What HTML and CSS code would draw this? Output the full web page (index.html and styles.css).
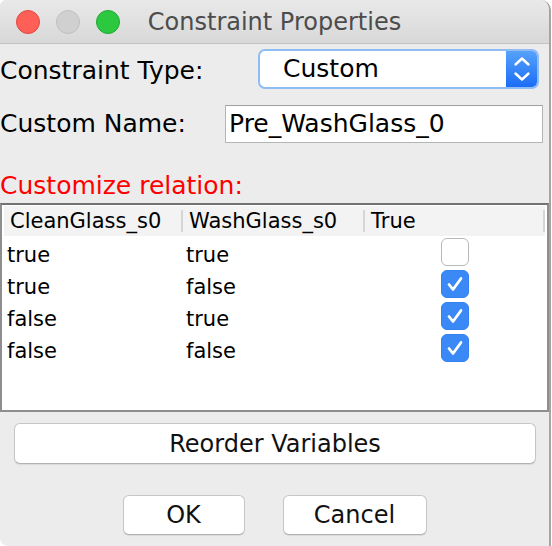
FILE: index.html
```html
<!DOCTYPE html>
<html>
<head>
<meta charset="utf-8">
<link rel="stylesheet" href="styles.css">
</head>
<body>
<div class="window">
  <div class="titlebar">
    <div class="lights">
      <span class="light red"></span>
      <span class="light gray"></span>
      <span class="light green"></span>
    </div>
    <div class="title">Constraint Properties</div>
    <div></div>
  </div>
  <div class="content">
    <div class="row row-type">
      <span class="label label-type">Constraint Type:</span>
      <div class="combo">
        <span class="combo-value">Custom</span>
        <span class="combo-arrows">
          <svg width="31" height="36" viewBox="0 0 31 36">
            <path d="M9.5 13.5 L16 7.5 L22.5 13.5" fill="none" stroke="#fff" stroke-width="2.4" stroke-linecap="round" stroke-linejoin="round"/>
            <path d="M9.5 22.5 L16 28.5 L22.5 22.5" fill="none" stroke="#fff" stroke-width="2.4" stroke-linecap="round" stroke-linejoin="round"/>
          </svg>
        </span>
      </div>
    </div>
    <div class="row row-name">
      <span class="label">Custom Name:</span>
      <div class="field">Pre_WashGlass_0</div>
    </div>
    <div class="section-title">Customize relation:</div>
    <div class="table">
      <div class="thead">
        <div class="th">CleanGlass_s0</div><div class="th-div"></div>
        <div class="th">WashGlass_s0</div><div class="th-div"></div>
        <div class="th">True</div><div class="th-div"></div>
      </div>
      <div class="tr"><div class="td">true</div><div class="td">true</div><div class="td td-check"><span class="checkbox"></span></div></div>
      <div class="tr"><div class="td">true</div><div class="td">false</div><div class="td td-check"><span class="checkbox on"><svg width="26" height="26" viewBox="0 0 26 26"><path d="M7 13.5 L11 18.5 L19 7.5" fill="none" stroke="#fff" stroke-width="2.8" stroke-linecap="round" stroke-linejoin="round"/></svg></span></div></div>
      <div class="tr"><div class="td">false</div><div class="td">true</div><div class="td td-check"><span class="checkbox on"><svg width="26" height="26" viewBox="0 0 26 26"><path d="M7 13.5 L11 18.5 L19 7.5" fill="none" stroke="#fff" stroke-width="2.8" stroke-linecap="round" stroke-linejoin="round"/></svg></span></div></div>
      <div class="tr"><div class="td">false</div><div class="td">false</div><div class="td td-check"><span class="checkbox on"><svg width="26" height="26" viewBox="0 0 26 26"><path d="M7 13.5 L11 18.5 L19 7.5" fill="none" stroke="#fff" stroke-width="2.8" stroke-linecap="round" stroke-linejoin="round"/></svg></span></div></div>
    </div>
    <button class="btn btn-wide">Reorder Variables</button>
    <div class="actions">
      <button class="btn btn-ok">OK</button>
      <button class="btn btn-cancel">Cancel</button>
    </div>
  </div>
</div>
</body>
</html>
```

FILE: styles.css
```css
html, body {
  margin: 0;
  padding: 0;
  background: #ffffff;
}

body {
  font-family: "DejaVu Sans", "Liberation Sans", sans-serif;
  color: #000;
}

.window {
  width: 549px;
  height: 546px;
  background: #ececec;
  border-right: 2px solid #a4a4a4;
  border-radius: 6px 10px 0 8px;
  overflow: hidden;
}

.titlebar {
  height: 43px;
  border-bottom: 1px solid #c4c4c4;
  background: linear-gradient(#e9e9e9, #d8d8d8);
  display: grid;
  grid-template-columns: 1fr auto 1fr;
  align-items: center;
}

.lights {
  display: flex;
  gap: 16px;
  padding-left: 16px;
}

.light {
  width: 24px;
  height: 24px;
  border-radius: 50%;
  box-sizing: border-box;
  border: 1px solid;
}

.light.red { background: #fe5f57; border-color: #e2463f; }
.light.gray { background: #d0d0d0; border-color: #bfbfbf; }
.light.green { background: #2bc840; border-color: #20a931; }

.title {
  font-size: 24px;
  color: #4c4c4c;
  line-height: 41px;
  padding-top: 2px;
  white-space: nowrap;
}

.content {
  padding-top: 5px;
}

.row {
  display: flex;
  align-items: center;
  justify-content: space-between;
}

.row-type {
  height: 40px;
  padding-right: 10px;
}

.row-name {
  height: 38px;
  margin-top: 16px;
  padding-right: 6px;
}

.label {
  font-size: 25px;
  line-height: 30px;
  white-space: nowrap;
}

.label-type {
  padding-top: 4px;
}

.combo {
  width: 281px;
  height: 40px;
  box-sizing: border-box;
  border: 2px solid #8fbcf4;
  border-radius: 7px;
  overflow: hidden;
  display: flex;
  background: #fff;
}

.combo-value {
  flex: 1;
  font-size: 25px;
  line-height: 36px;
  padding-left: 23px;
}

.combo-arrows {
  width: 31px;
  display: flex;
  background: linear-gradient(#56a2fb, #1b6df6);
}

.field {
  width: 318px;
  height: 38px;
  box-sizing: border-box;
  border: 1px solid #b4b4b4;
  border-top-color: #a0a0a0;
  background: #fff;
  font-size: 25px;
  line-height: 36px;
  padding-left: 3px;
  white-space: nowrap;
}

.section-title {
  margin-top: 28px;
  font-size: 25px;
  line-height: 30px;
  color: #fe0000;
}

.table {
  margin-top: 2px;
  height: 209px;
  box-sizing: border-box;
  border: 2px solid #8e8e8e;
  border-top-color: #727272;
  background: #fff;
  padding: 1px 2px 0 2px;
}

.thead {
  display: grid;
  grid-template-columns: 177px 2px 180px 2px 178px 2px;
  height: 30px;
  background: #f3f3f3;
  align-items: center;
}

.th {
  font-size: 21px;
  line-height: 30px;
  padding-left: 6px;
  white-space: nowrap;
  overflow: hidden;
}

.th-div {
  height: 22px;
  background: #d6d6d6;
}

.tr {
  display: grid;
  grid-template-columns: 179px 182px 180px;
  height: 32px;
}

.td {
  font-size: 21px;
  line-height: 26px;
  padding-top: 6px;
  padding-left: 3px;
}

.td-check {
  display: flex;
  align-items: center;
  justify-content: center;
  padding: 0;
}

.checkbox {
  width: 28px;
  height: 28px;
  box-sizing: border-box;
  border-radius: 6px;
  border: 1px solid #b9b9b9;
  background: #fff;
  display: flex;
  align-items: center;
  justify-content: center;
}

.checkbox.on {
  background: #3b88f7;
  border-color: #3581ef;
}

.btn {
  font-family: "DejaVu Sans", "Liberation Sans", sans-serif;
  font-size: 24px;
  color: #111;
  background: #fff;
  border: 1px solid #c6c6c6;
  border-bottom-color: #b2b2b2;
  border-radius: 6px;
  box-shadow: 0 1px 1px rgba(0, 0, 0, 0.08);
  padding: 0;
  box-sizing: border-box;
}

.btn-wide {
  display: block;
  width: 522px;
  height: 41px;
  margin: 11px 0 0 14px;
}

.actions {
  display: flex;
  justify-content: center;
  gap: 38px;
  margin-top: 31px;
}

.btn-ok {
  width: 122px;
  height: 40px;
}

.btn-cancel {
  width: 144px;
  height: 40px;
}
```
